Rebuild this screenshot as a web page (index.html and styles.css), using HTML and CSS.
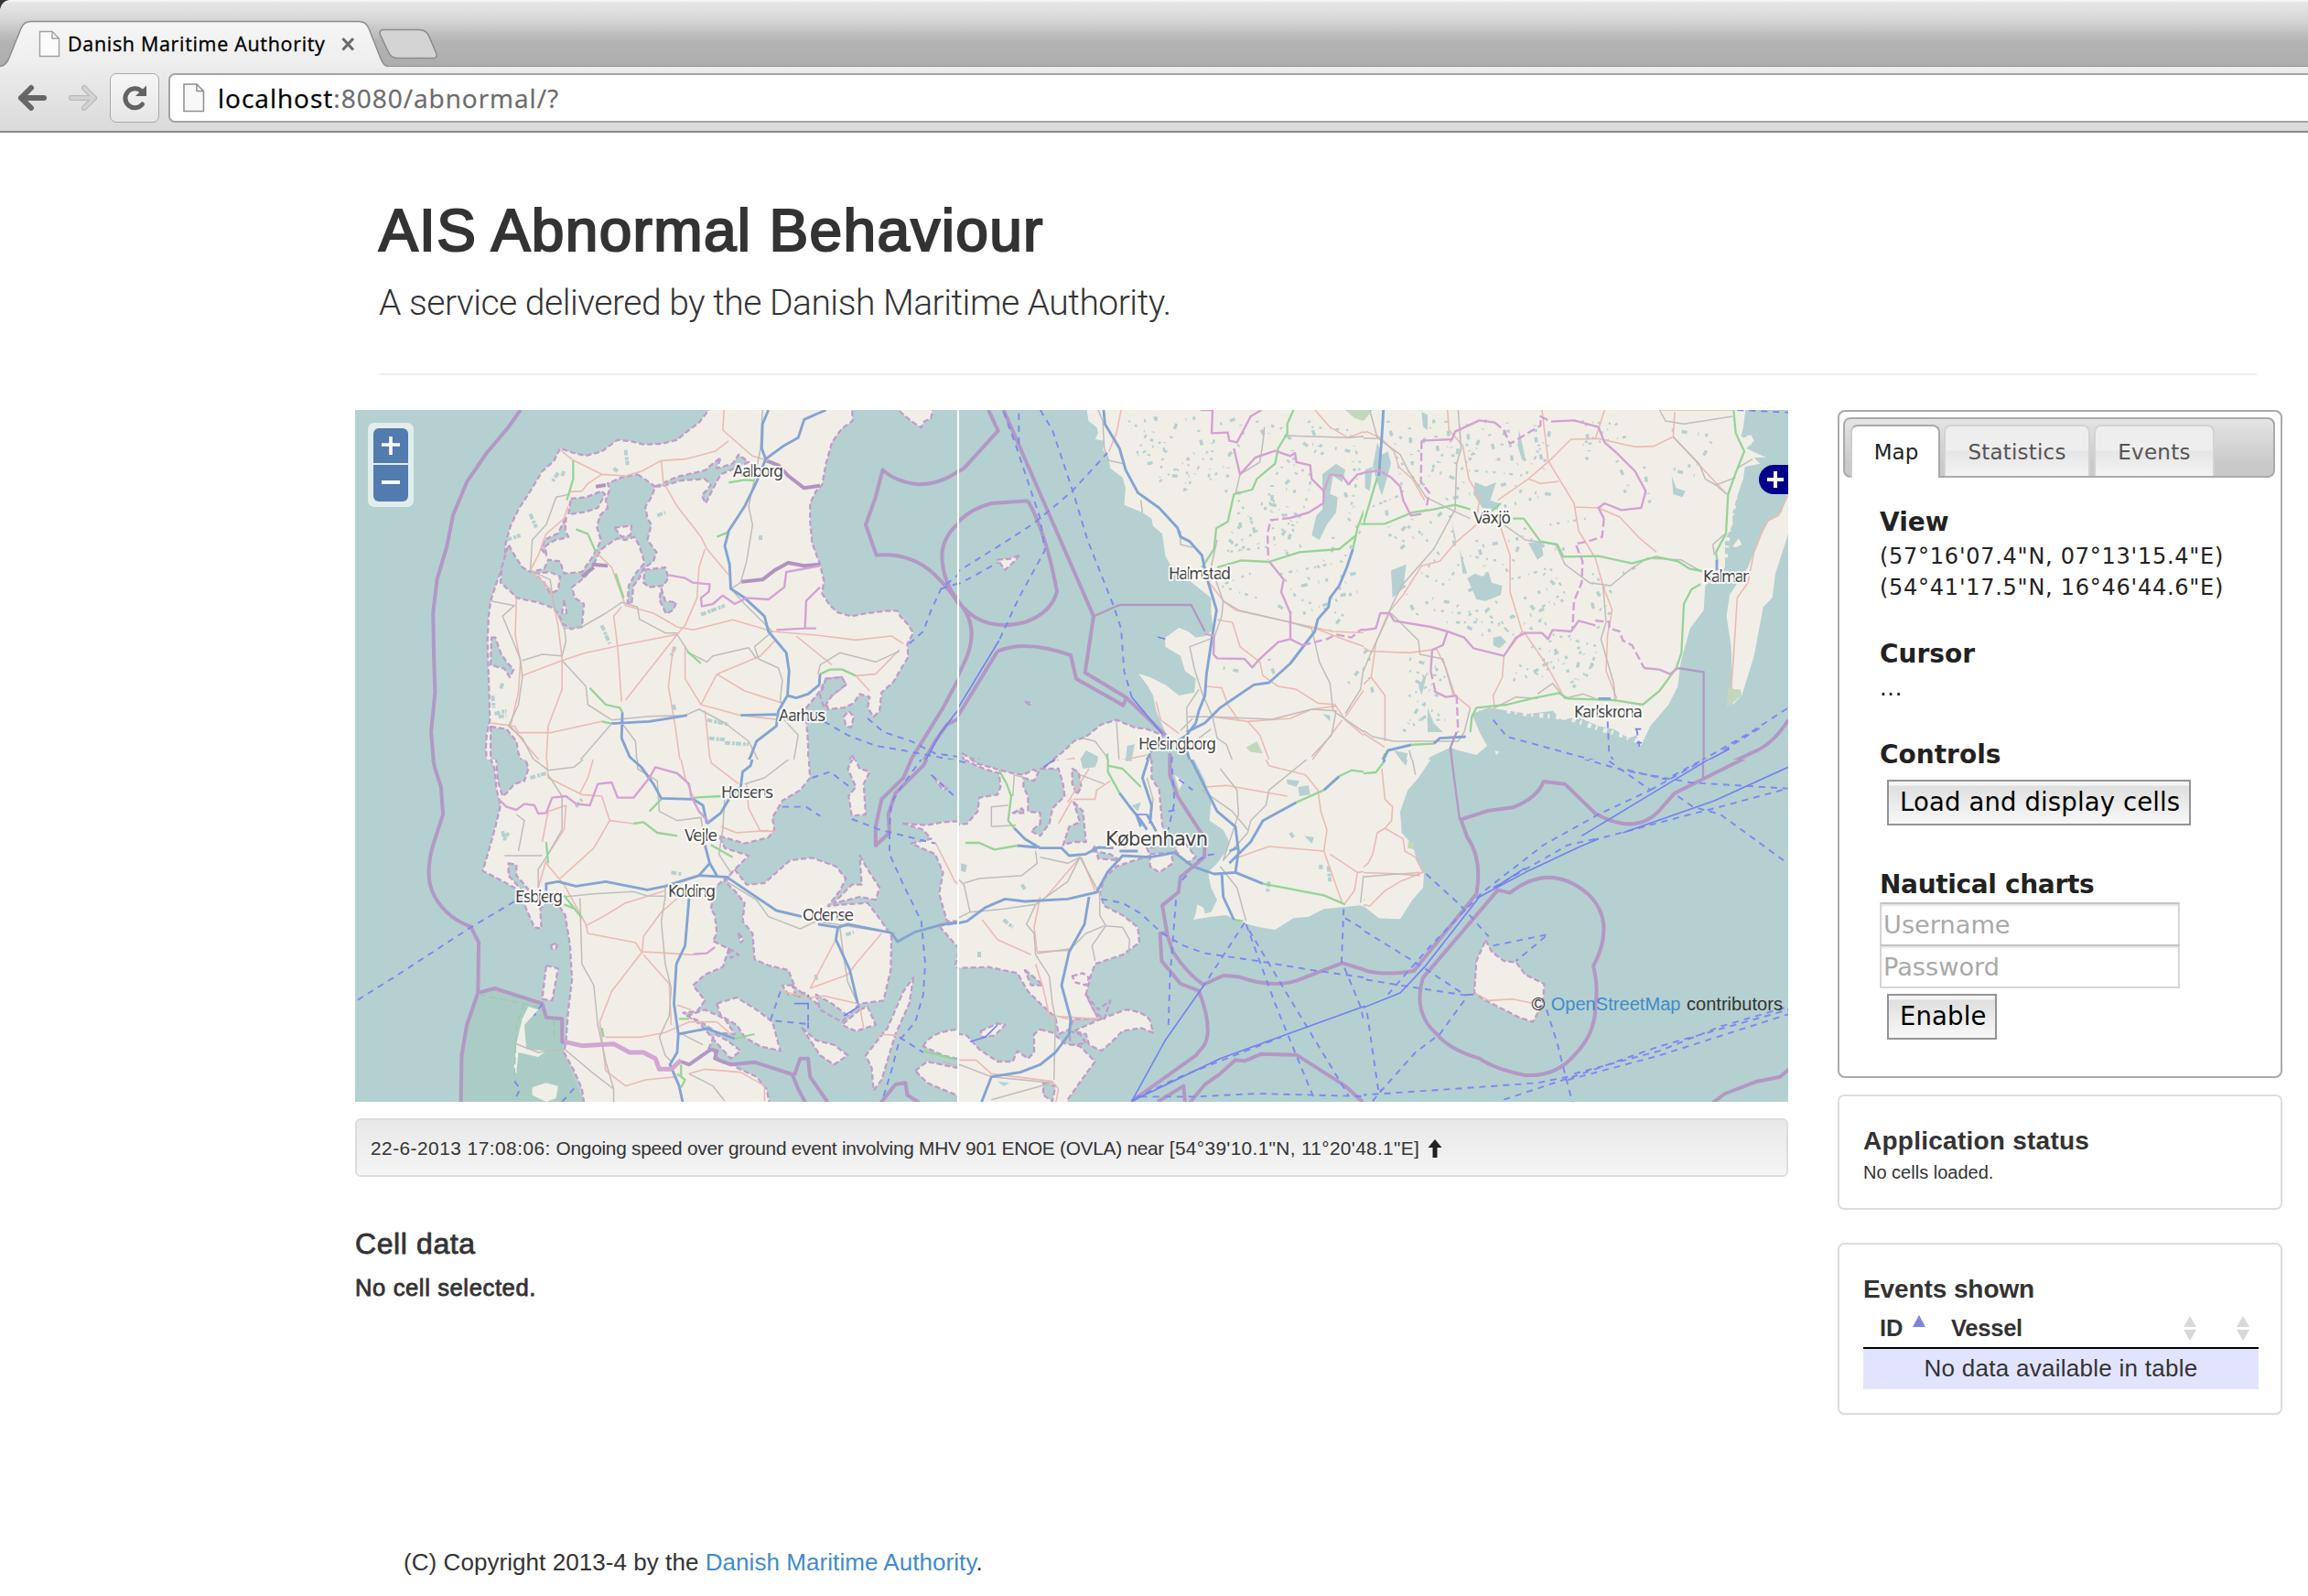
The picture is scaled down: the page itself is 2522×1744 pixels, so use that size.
FILE: index.html
```html
<!DOCTYPE html>
<html lang="en">
<head>
<meta charset="utf-8">
<title>Danish Maritime Authority</title>
<link rel="stylesheet" href="styles.css">
</head>
<body>
<div class="chrome">
  <div class="tabstrip">
    <svg class="tab-shapes" width="500" height="74" viewBox="0 0 500 74">
      <defs>
        <linearGradient id="tabfill" x1="0" y1="0" x2="0" y2="1"><stop offset="0" stop-color="#f6f6f6"/><stop offset="1" stop-color="#ededed"/></linearGradient>
      </defs>
      <path d="M0 0H10Q2 1 0 10Z" fill="#333"/>
      <path d="M0 72.500Q7 72 10 63L23 31Q26 23.500 34 23.500H392Q400 23.500 403 31L416 64Q419 72 424 72.500V74H0Z" fill="url(#tabfill)"/>
      <path d="M0 72.500Q7 72 10 63L23 31Q26 23.500 34 23.500H392Q400 23.500 403 31L416 64Q419 72 424 72.500" fill="none" stroke="#8d8d8d" stroke-width="1.500"/>
      <path d="M419 32.500H458Q466 32.500 469 40L477 59Q478 63.500 473 63.500H434Q427 63.500 424 56L415.500 38Q414 32.500 419 32.500Z" fill="#d4d4d4" stroke="#8a8a8a" stroke-width="1.500"/>
      <path d="M43.500 34.500H57L64.500 42V61.500H43.500Z" fill="#fbfbfb" stroke="#a0a0a0" stroke-width="1.400"/><path d="M57 34.500V42H64.500" fill="none" stroke="#a0a0a0" stroke-width="1.400"/>
      <path d="M374.500 42L386 54.500M386 42L374.500 54.500" stroke="#6b6b6b" stroke-width="3"/>
    </svg>
    <span class="tab-title">Danish Maritime Authority</span>
  </div>
  <div class="toolbar">
    <svg class="nav" width="110" height="54" viewBox="0 0 110 54">
      <path d="M34 16L23 27 34 38M23 27H48" fill="none" stroke="#666" stroke-width="6" stroke-linecap="round" stroke-linejoin="round"/>
      <path d="M92 16L103 27 92 38M103 27H78" fill="none" stroke="#b8b8b8" stroke-width="6" stroke-linecap="round" stroke-linejoin="round"/>
      <path d="M92 16L103 27 92 38M103 27H78" fill="none" stroke="#d4d4d4" stroke-width="3.600" stroke-linecap="round" stroke-linejoin="round"/>
    </svg>
    <div class="reload"><svg width="30" height="30" viewBox="0 0 30 30"><path d="M23.500 22A10.500 10.500 0 1 1 22.500 7.500" fill="none" stroke="#636363" stroke-width="5" stroke-linecap="round"/><path d="M28 1.500V13H16Z" fill="#636363"/></svg></div>
    <div class="omnibox">
      <svg width="24" height="32" viewBox="0 0 24 32"><path d="M1 1H15L22.500 8.500V30.500H1Z" fill="#f8f8f8" stroke="#8f8f8f" stroke-width="1.500"/><path d="M15 1V8.500H22.500" fill="none" stroke="#8f8f8f" stroke-width="1.500"/></svg>
      <span class="url"><b>localhost</b>:8080/abnormal/?</span>
    </div>
  </div>
</div>

<header class="page-header">
  <h1>AIS Abnormal Behaviour</h1>
  <p class="lead">A service delivered by the Danish Maritime Authority.</p>
</header>

<main class="columns">
  <section class="main-col">
    <div class="map">
      <svg class="map-canvas" viewBox="388 448 1566 756" width="1566" height="756">
        <!-- north-west: northern Jutland -->
        <svg x="380" y="440" width="667" height="390" viewBox="0 0 1538 1170" preserveAspectRatio="none">
          <path class="land coast" d="M910 -20L910 24 885 65 850 100 830 122 790 135 745 137 715 127 680 122 640 160 600 174 570 165 535 150 520 190 490 225 460 290 430 350 410 405 398 460 395 520 375 590 360 650 355 700 352 780 355 900 358 1040 350 1090 348 1130 352 1220H1160V1130L1158 1080 1155 1040 1150 1010 1165 985 1190 945 1205 905 1245 900 1255 925 1230 950 1205 975 1210 1005 1250 1000 1275 985 1290 955 1315 965 1310 1000 1325 1030 1340 1010 1345 950 1375 915 1395 870 1412 835 1410 790 1425 755 1410 725 1392 700 1385 682 1355 683 1300 692 1270 700 1235 688 1215 665 1195 625 1200 585 1190 530 1170 460 1165 390 1165 330 1180 290 1195 270 1205 200 1220 130 1245 85 1272 60 1270 -20Z"/>
          <path class="land coast" d="M1390 0L1392 30 1410 50 1425 65 1445 82 1452 62 1470 50 1476 0ZM1250 1030L1262 1010 1275 1030 1268 1065 1255 1060ZM1270 1155L1280 1180H1262Z"/>
          <path class="lake coast" d="M730 235L775 275 765 310 750 340 755 380 765 400 755 450 778 490 770 520 745 545 735 575 720 600 715 660 705 655 708 600 725 560 748 525 735 470 722 440 700 450 680 445 655 465 640 480 630 500 615 545 595 575 565 605 572 640 595 660 590 735 562 742 542 725 530 690 515 672 480 655 425 640 415 625 385 590 388 540 405 465 420 500 440 540 460 555 495 545 505 515 535 520 545 560 590 555 612 515 628 480 638 450 628 410 635 370 655 345 650 320 660 285 655 265 690 245Z"/>
          <path class="land coast" d="M470 560L510 555 535 570 530 615 510 625 495 590ZM672 410L715 403 712 435 690 440ZM545 650L552 690 540 690Z"/>
          <path class="lake coast" d="M562 315L600 310 640 290 648 300 630 345 600 358 556 366ZM550 375L548 420 556 440 520 452 498 470 500 500 488 480 495 450 530 428ZM748 548L800 540 808 575 795 600 760 605 745 590ZM790 610L800 650 828 655 820 680 802 692 785 645ZM362 770L372 770 385 820 400 850 418 875 408 900 395 872 360 860ZM360 1062L400 1070 425 1110 430 1150 455 1220 360 1220ZM1205 905L1245 900 1255 925 1220 960 1200 1000 1190 960Z"/>
          <path class="lake coast" d="M775 275L830 243 900 222 915 205 940 180 930 215 970 200 985 170 1010 195 975 215 940 235 925 270 902 330 892 305 915 270 900 250 840 255 790 275Z"/>
          <path class="fj" d="M1055 190L1085 205 1110 240 1150 280 1190 272M625 275L650 270M615 530L655 535M620 540L590 570"/>
          <path class="fj" d="M992 587L1045 580 1075 550 1110 525 1150 535 1190 530"/>
          <path class="lakeline" d="M700 155L705 205M530 230L515 260M545 225L540 240M670 215L680 225M460 365L475 410M400 450L435 435M720 350L735 375M780 370L800 360M890 695L950 665M640 730L660 790M365 960L368 1000M370 1020L400 1010M380 1030L400 1025M950 1115L1010 1120M905 1040L960 1055M825 800L815 830M390 920L385 940M730 250L740 270M1040 435V450M820 990L825 1010M910 1100L950 1105"/>
          <path class="pink" d="M948 24L945 90 1020 175 1060 190M960 125L925 160 850 185 790 190 740 225 700 240 640 235 570 190 535 155M640 235L605 265 590 290 560 292M790 190L795 260 830 340 890 440 905 480 960 565M555 340L545 380 500 430 480 500 460 550 510 610 520 670 530 730 540 840 540 940 505 1060 500 1180M900 480L885 540 880 640 850 730 830 760 690 795 600 820 540 845 440 895M625 490L665 540 700 665 770 690 830 735 870 745 970 712 1070 750 1180 762 1280 778 1370 765 1400 790M425 640L422 760 435 850 430 950 410 1060M690 670L670 700 680 800 690 980M830 760L700 975M820 800L808 930 825 1060 840 1200M850 800L850 905 890 990 930 890 1040 830 1080 775M360 1050L420 1060 430 1082 510 1082 640 1045M890 990L990 1025 1090 1040M930 890L1000 945 1095 985M1130 765L1220 860M1280 895L1330 890 1390 810M1280 895L1315 945M900 1010L915 1200M410 1060L500 1200"/>
          <path class="rail" d="M1045 24L1040 150 1025 250 1010 340 1020 400 1005 520 990 590 965 610 1000 660 1070 750 1025 800 1035 840 1085 870 1095 910 1090 970 1100 1040 1135 1090 1120 1200M560 300L525 310 500 400 465 450 460 550 510 580 520 670 545 740 590 735 650 690 690 655 730 670 735 710 800 755 830 755M360 650L420 665 390 700 435 840 440 900 430 990 405 1060 440 1100 480 1200M545 735L550 780 540 830 490 825 440 845M540 845L600 930 605 990 665 1040 760 1028 850 1025 885 1005 950 1050 1010 1110 1045 1200M830 760L860 820 905 850 920 830 1010 803 1030 840M1185 890L1190 860 1240 820 1330 850 1390 815M665 1052L580 1180M690 1050L725 1110 730 1200"/>
          <path class="green" d="M568 190L568 250 552 320M575 415L605 430 625 490M675 560L695 640M855 815L890 855M610 935L650 990 685 1000 692 1015M640 1045L665 1052M1190 890L1215 875 1245 874 1280 895M930 440L958 425M960 262L1000 253 1025 255"/>
          <path class="blue" d="M1060 24L1045 70 1043 150 1053 185 1030 260 1000 340 960 420 950 470 962 530 965 610 1000 640 1050 700 1060 750 1105 820 1112 880 1108 960 1085 1010 1080 1060 1030 1110 1015 1160 1000 1200M1205 24L1150 55 1135 115 1100 140 1053 185M1108 960L1130 968 1160 955 1188 925 1190 890M665 1052L760 1045 800 1037 855 1025M692 1015L690 1100 710 1160 740 1200M990 1025L1080 1022"/>
          <path class="county" d="M808 565L850 575 870 590 912 595 910 620 890 640 892 668 920 660 945 632 975 660 1005 640 1060 645 1100 605 1105 555 1190 535M1190 605L1155 650 1152 740 1080 745M1152 740H1180"/>
          <path class="sea-b" d="M435 24L405 80 350 165 300 260 265 370 250 470 225 580 215 690 217 830 220 950 210 1080 218 1200M1570 185Q1520 265 1440 268 1380 260 1348 220L1330 310 1305 400 1332 500Q1420 490 1480 565T1570 740M1570 365Q1490 430 1498 520 1502 590 1538 650M1570 830L1500 1000 1405 1200M1570 1015L1510 1055 1480 1110 1440 1200"/>
          <path class="ferry" d="M1415 790L1450 750 1470 680 1495 610 1570 530M1495 610L1570 580M1200 1045L1260 1090 1330 1125 1400 1140 1560 1180M1310 1035L1350 1080 1420 1110 1480 1150 1560 1165"/>
          <path class="ferry-s" d="M1570 960L1530 1020 1490 1090 1445 1200"/>
        </svg>
        <!-- south-west: southern Jutland and Funen -->
        <svg x="380" y="830" width="667" height="374" viewBox="0 30 1538 1122" preserveAspectRatio="none">
          <path class="sanct" d="M330 795L370 780 490 830 500 875 540 880 540 955 545 990 560 1040 595 1160H285L290 950Z"/>
          <path class="land coast" d="M352 0L370 60 375 130 385 180 372 250 355 330 340 395 385 425 420 450 440 490 470 580 488 585 485 520 500 500 530 505 548 540 560 640 565 750 555 860 550 950 545 990 570 1050 590 1110 597 1170H1065L1055 1110 1030 1070 980 1040 960 1020 940 1025 920 980 905 990 925 930 955 950 990 985 965 1010 930 960 890 900 845 860 880 855 900 820 870 770 900 735 945 710 960 650 920 625 930 600 925 540 915 520 925 450 960 410 1010 345 950 320 935 280 1000 305 1060 285 1075 260 1070 220 1095 165 1140 130 1165 90 1160 0Z"/>
          <path class="lake coast" d="M372 -10H440L455 60 445 100 420 110 400 140 390 150 378 100ZM405 370L425 375 425 410 455 455 440 460 405 410Z"/>
          <path class="land coast" d="M975 390L1005 440 1050 435 1080 400 1115 360 1170 352 1230 380 1255 420 1240 460 1210 510 1250 505 1310 500 1345 560 1370 610 1368 720 1350 820 1290 830 1260 870 1200 850 1150 795 1110 800 1095 770 1125 770 1110 720 1060 705 1025 685 1020 600 995 560 1000 500 975 460 950 430ZM1290 345L1310 390 1340 450 1330 490 1290 480 1260 490 1225 500 1270 440 1295 440ZM1275 20L1290 60 1315 70 1300 110 1305 210 1270 215 1262 150 1280 120 1260 60ZM1425 745L1415 830 1380 930 1345 1080 1325 1115 1320 1040 1305 1000 1360 910 1400 790ZM1145 910L1180 950 1225 965 1260 1000 1225 1030 1190 1000ZM1290 850L1310 840 1330 900 1280 920 1245 900ZM930 830L980 810 1030 850 1070 890 1090 985 1040 970 1000 940 980 900 940 870ZM855 870L900 850 950 880 975 930 930 925 890 890ZM1400 240L1460 245 1500 235 1570 230V560L1510 560 1490 470 1500 400 1480 340 1420 305 1470 290 1450 260ZM1490 575L1570 560V720L1530 710 1540 650ZM1450 970Q1470 920 1540 915H1570V1020L1500 1000ZM1430 1050L1460 1020 1570 1050V1150L1460 1090ZM500 705L530 715 515 820 490 815ZM985 600L998 620 990 630ZM512 640L528 630 525 650 515 652ZM1475 85L1510 125 1500 130Z"/>
          <path class="land" d="M455 840L480 850 445 900 450 980 500 985 480 1005 430 990 425 1060 418 1050 425 960 440 880ZM465 1105L500 1090 530 1100 525 1140 500 1152 465 1130Z"/>
          <path class="lake coast" d="M1180 800L1220 830 1260 870 1245 890 1190 850ZM1120 770L1150 800 1130 810ZM960 650L985 670 965 680Z"/>
          <path class="lakeline" d="M390 265L395 290 405 270M1180 735V755M1255 605L1275 595M460 90L500 75M1550 370V400M815 400L840 405M575 185L590 160"/>
          <path class="pink" d="M500 0L505 90 590 145 640 150 660 230 720 240M625 0L605 90 585 140M835 0L850 90 870 150M915 0V40L985 110M660 230L620 320 535 420M500 360L480 450M500 370L545 440 600 570 605 600 725 630 740 660 810 665 870 670M600 575L650 540 700 500 800 460M835 480L790 530 745 610 742 660 665 790 635 890 650 1050 700 1100 750 1080 830 1070M745 670L810 765 815 900M650 940L740 940 800 925 860 890 930 890 965 930M490 300L505 200 550 180M550 180L545 260 505 340M1005 110L1010 190 1040 265 1080 265M940 250L980 270 1060 262M1230 620L1165 780M1345 600L1280 700 1260 735 1165 780M830 835L865 850M860 1060L900 1045 990 1055 1050 1100 1050 1150M1325 930L1400 935M1480 300L1530 430 1570 480M1095 790L1165 810 1200 805 1285 830M1290 840L1300 910"/>
          <path class="rail" d="M460 20L505 65 570 55 620 0M505 80L540 150 540 260 500 350 480 390 480 450M395 345H490M545 480L620 470 720 463 755 477 800 478V440M585 485L590 700 620 770 630 900 650 1020 670 1110V1152M420 960L480 990 545 978 620 1060 670 1110M800 480L790 560 800 700 815 780 810 870 785 940 800 1000 815 1020M730 0V60L780 100 785 200 830 230 890 220 895 270M950 150L945 260 935 340 965 400 955 430 1030 490 1060 545 1140 585 1180 560 1380 600M1140 0L1050 90 1000 110M425 210L445 230 430 330M1240 580L1250 680 1260 760 1285 830M835 925L895 965M860 1060L920 1100 950 1150M1500 1020L1570 1050"/>
          <path class="green" d="M790 160L760 200M720 240L745 235 780 270 830 280M500 300L505 370M545 475L590 550M870 155L940 150M915 310L970 350M545 505L575 520M835 880L860 880M975 945L1025 930M640 910L645 940M830 1060L850 1080 840 1105M840 1030L840 1070M1450 985L1530 1012"/>
          <path class="blue" d="M692 0L740 55 770 110 790 157 870 160 895 180 905 240M1025 0L1015 50 995 70 990 120 965 150 940 205 905 240M900 310L912 370 885 410 800 445 755 457 650 430 575 445 530 430 500 437V460M885 410L955 415 1000 455 1080 525 1145 545M912 370L930 410M1185 570L1235 580 1260 570 1370 598M1235 580L1230 620 1265 720 1285 830M1370 598L1385 627 1430 595 1500 570 1570 560M860 485L850 640 828 700 822 830 833 930 830 990 812 1030 835 1100 845 1160M833 930L905 912 975 945"/>
          <path class="county" d="M380 160L400 185 425 195 445 175 470 180 480 207 500 205 515 155 550 150 575 175 610 180 630 110 665 105 680 155 720 155 760 90 775 55 830 75 860 110 865 150 885 200 910 235M870 668L905 665 925 645"/>
          <path class="border" d="M545 955L590 968 670 962 710 990 745 990 775 1010 785 1045 815 1045 840 1015"/>
          <path class="sea-b" d="M210 0L220 60 235 120 240 210 215 310Q195 400 212 460 240 545 310 578L330 630 328 795 370 780 490 830 500 875 540 880V955L545 960M328 795L300 900 287 1000 285 1152M840 1020L860 1030 915 980 930 985 925 1010 965 1030 1025 1022 1120 1062 1135 1110 1155 1160M1125 1065L1140 1010 1160 1010 1165 1070 1210 1155M1430 0L1400 90 1345 160 1330 250V312L1365 270 1362 210 1380 140 1450 50 1470 0M1340 1160L1380 1095 1405 1090 1410 1130 1440 1155"/>
          <path class="sea-g" d="M330 800L420 825 480 840M445 830L425 900 420 1060 425 1100M520 880V950"/>
          <path class="ferry" d="M25 818L115 745 310 580 420 495M1365 270V340L1400 440 1445 560 1455 700 1450 800 1430 890 1390 950 1370 1050 1345 1155M1450 20L1400 110 1370 170 1365 260M1270 225L1340 260 1480 305M1095 185H1155L1190 215M1170 90L1215 70 1270 125M1090 790L1065 885 1160 897V800M1160 890V930M540 1152L570 1108M490 830L470 870M420 1085L435 1110 420 1145M1390 940L1450 990M1470 80L1570 200"/>
          <path class="ferry-s" d="M1290 838L1250 870M1125 830H1160"/>
        </svg>
        <!-- north-centre: Kattegat and west Sweden -->
        <svg x="1048" y="440" width="442" height="390" viewBox="24 0 1326 1170" preserveAspectRatio="none">
          <path class="land" d="M440 0L448 60 475 80 480 100 470 120 500 125 495 155 512 175 520 215 560 245 570 280 565 335 625 360 655 380 660 405 690 430 700 500 715 530 750 560 800 600 850 640 850 690 858 745 830 765 800 770 775 750 745 738 700 770 700 800 750 830 765 880 800 905 795 950 745 960 700 925 650 900 612 888 640 925 660 960 670 1010 700 1080 730 1120 770 1150 800 1200H1400V0Z"/>
          <path class="land coast" d="M655 1200L650 1150 690 1090 640 1070 600 1065 540 1040 490 1055 440 1095 400 1110 370 1140 320 1180 290 1180 270 1210H660Z"/>
          <path class="land coast" d="M150 515L190 512 225 498 200 525 175 548ZM240 980L262 985 255 990ZM35 1150L60 1165 130 1182 200 1200H45Z"/>
          <path class="lake" d="M1215 235L1260 200 1290 220 1280 260 1250 240 1240 300 1265 310 1260 360 1230 400 1205 450 1180 435 1195 370 1215 350ZM660 755L680 765 665 775ZM420 1170L440 1140 480 1160 470 1200H420ZM575 1125L600 1120 590 1170H570ZM1215 1020L1240 1025 1240 1045ZM1360 180H1380V280L1355 240Z"/>
          <path class="speck" d="M630 60L670 50 640 200 690 190 740 60 800 50 820 140 720 240 780 240M880 70L940 50 960 120 910 170 900 290 970 300M1000 60L1030 120 1060 60 1110 120 1130 230 1080 280 1160 300M1050 270L1050 360 1000 330 1100 340 1080 440 1130 360 1090 500 1160 460M940 360L960 500 900 440 980 380 1010 480M1170 60L1220 180 1150 130 1310 160 1320 220 1290 300 1330 360M1250 440V480L1150 600 1320 560 1240 640 1330 620 1130 700 1060 660M890 870L940 880M1040 840L1060 900M1300 920L1350 860M1240 750L1280 700"/>
          <path class="dots" d="M580 60L640 100 600 180 700 120 680 260 780 180 760 300 860 120 840 260 900 200M940 320L1000 420 900 490 1060 470 1040 300 1120 420 1160 330 1180 240 1100 190 1060 240M1180 80L1300 90 1340 200 1300 380 1340 420 1280 520 1190 540 1080 560 1130 640 1290 700M980 560L880 600 1000 640"/>
          <path class="park" d="M965 1130L1000 1110 1020 1150 980 1145ZM1290 24H1350V60L1320 50Z"/>
          <path class="pink" d="M555 24L540 100 515 160M845 590L890 650 930 680 1100 718 1180 735 1250 750 1360 755M1190 24L1240 80 1300 115 1350 95 1380 100M870 712L920 720 945 800 1010 850 1020 895 1070 930 1130 940 1200 985 1260 990M835 930L885 935 905 990 940 1040M860 1030L970 1045 1110 1035 1180 1005 1260 995 1290 1040 1360 1100M970 1045L1010 1090 1040 1170M670 980L685 1040 745 1085M1180 735L1270 770 1380 810M1290 1030L1380 900M1280 1040L1160 1200M440 1190L520 1180 640 1155M320 1185L400 1165 410 1200"/>
          <path class="rail" d="M480 24L495 60 500 150 515 190 565 200M620 320L625 360M945 235L1010 195 1020 130 1025 80M945 235L930 300M1090 108L1300 115 1380 108M750 420V465L790 475M870 450L850 540 890 650 885 700 860 770 780 800 795 870 820 950 855 1030 870 1100 900 1120 930 1200M775 1150L770 1000 810 940M775 1030H860L1050 1038 1180 1005 1260 1010 1245 1090 1180 1160M890 650L940 680 1110 720 1180 740 1205 850 1240 920 1250 1010 1380 1100M1380 790L1350 870 1340 940 1290 1020M540 1045L545 1120 550 1190M430 1100L470 1110 500 1150 530 1195M750 1075L790 1035M810 1100L850 1070"/>
          <path class="green" d="M1120 24L1100 70 1100 100 1070 150 1060 200 1000 250 985 285 925 300 905 390 867 412 860 480 820 540M870 540L950 517 1040 522 1140 490 1270 480 1325 435 1330 410 1380 280M1315 480L1325 435M1340 398H1380M510 1150V1200"/>
          <path class="blue" d="M498 24L502 70 550 150 570 220 610 295 680 345 740 410 750 440 780 455 820 500 835 570 868 680 855 760 835 890 830 960 810 1010 800 1050 770 1090 740 1110M1315 480L1295 540 1270 600 1240 640 1235 670 1200 710 1190 750 1110 855 1040 918 990 925 880 1000 830 1050 770 1080M650 1150L625 1200M770 1140L790 1200"/>
          <path class="county" d="M815 24H855L852 100 905 98 910 125 935 130 980 45 1015 24M925 150L945 235 995 180 1060 158 1110 175 1125 165 1130 195 1175 205 1180 250 1220 290 1218 330 1170 360 1110 378M1220 290L1240 235 1280 240 1300 268 1330 235 1380 225M1040 520L1088 580 1080 620 1110 690V775L1070 785 1010 840 985 868 960 840 870 838 858 825 860 765 830 758M1110 775L1150 795"/>
          <path class="county-d" d="M1150 795L1230 775 1260 760 1310 770 1340 745 1380 740M1110 378L1045 385 1035 430 1038 515"/>
          <path class="sea-b" d="M120 24L152 92 40 215 0 240M170 24L465 700 437 885 570 965 700 1090M150 815L0 1060M150 815Q240 775 390 828L408 905 562 992 573 967M250 322Q310 430 345 620 325 690 240 720 100 755 24 655L0 610M250 322L130 330Q50 350 0 415M24 655Q100 740 35 865L0 940M715 1150V1200"/>
          <path class="sea-t" d="M550 663H785L830 750M465 700L550 663"/>
          <path class="ferry" d="M170 30L210 140 290 380 305 485 220 640 155 780M220 35V150M290 24L330 90 400 300 445 450 530 665 555 740 565 880 590 965M10 560L170 460 270 395 390 295 510 165M10 600L60 575 150 525M722 1160V1200"/>
          <path class="ferry-s" d="M155 780L0 1035M590 965L690 1085M675 768L700 775"/>
        </svg>
        <!-- south-centre: Zealand, Øresund, Scania -->
        <svg x="1048" y="830" width="442" height="374" viewBox="24 30 1326 1122" preserveAspectRatio="none">
          <path class="land coast" d="M655 10H380L350 28 320 40 285 78 270 62 235 80 200 75 150 62 80 42 45 15 40 28 70 45 110 62 155 75 160 120 150 145 90 155 85 200 50 240 -20 250V715L120 710 215 730 250 790 290 830 340 875 350 930 385 915 400 880 480 880 440 800 455 740 470 700 560 670 615 630 610 580 560 540 500 510 485 470 500 420 540 380 600 360 650 345 640 320 700 310 690 240 680 130 655 90 655 10Z"/>
          <path class="land coast" d="M395 740L430 730 450 745 440 770 405 760ZM650 340L720 335 725 370 680 400 650 380ZM490 880L570 850Q630 855 650 885L660 925 620 910 560 920 520 960 490 985 450 965 440 930 400 920ZM290 915L330 925 370 960 420 970 470 1020 440 1060 380 1145 375 1170H-20V920L50 935 90 980 150 1020 200 1020 215 985 250 1010 270 990 270 930ZM740 290L770 310 800 350 770 370 735 330ZM95 920L150 895 175 900 140 935 100 940Z"/>
          <path class="lake coast" d="M235 90L270 100 290 60 350 60 365 110 370 150 330 190 320 240 290 280 260 265 290 240 290 205 250 200 250 150 235 120ZM395 60L415 70 425 120 410 145 395 110ZM400 170L430 200 440 300 400 300 365 310 385 250 420 235ZM460 330L520 340 550 360 480 355 470 310ZM240 720L265 740 300 770 260 770ZM440 800L480 850 520 820 500 880 470 860ZM385 920L420 930 440 960 390 965ZM300 1090L340 1100 330 1150 300 1130ZM200 205L230 190 240 205Z"/>
          <path class="land" d="M780 0L830 100 850 170 845 230 890 260 910 300 900 330 870 370 840 400 850 450 870 490 850 530 830 535 825 515 805 505 800 535 792 555 850 545 900 540 950 565 1010 580 1060 588 1120 550 1170 545 1220 520 1340 508 1390 530V0ZM730 80L760 100 745 130Z"/>
          <path class="lake" d="M420 20L450 5 480 30 470 55 430 60ZM1098 95L1140 100 1130 120 1100 110ZM1135 120L1170 115 1175 145 1140 150ZM30 370L50 375 45 400 30 395ZM1155 280L1188 285 1180 305ZM150 1085L190 1090 170 1100ZM570 10H590V35H570ZM590 180L620 170 610 200Z"/>
          <path class="lakeline" d="M230 440L240 455M170 555L200 580M1110 270L1120 285M1210 375V390M1235 380L1240 430M90 660V680M1040 430L1035 465"/>
          <path class="pink" d="M290 480L270 580 280 660 390 655M275 700L300 780 320 870 480 880M100 555L150 620 260 670M400 160H470L475 130 520 100M395 160L350 240M940 350L1040 315 1220 330 1230 260 1210 200 1200 130 1160 80M830 120L900 115 1100 150M1220 330L1280 500M1240 340L1330 400 1400 390M0 1015H80L130 1060 330 1085 350 1110 340 1160M425 350L470 460M420 350L310 480M340 870L420 890M450 60L380 170M1160 80L1040 50 1020 10M530 260L570 320M1330 400L1320 460 1290 500"/>
          <path class="rail" d="M20 550L60 530 170 520 275 505 380 430 420 350 485 470V540L505 575 560 580 583 620 580 665M505 575L460 640 470 690M0 400L40 440 60 530M40 435L90 420 230 410 280 370 275 330M275 505L245 570 270 600 275 670 320 740 330 830 340 880 335 1080M0 1020L130 1070 330 1090M130 1145L330 1090M130 250L210 245M130 250V185L185 180M200 150L205 80 240 90M290 350L380 370 420 350M1040 130L1030 180 980 230 970 270 890 360 940 210 935 130 880 60M970 260L920 200 820 130M880 380L935 450 965 560M1040 130L1200 0M500 575L440 600 390 650 280 665M640 90L660 160 650 230M420 80L500 110M1350 410L1340 500"/>
          <path class="green" d="M155 65L180 110 195 150 185 230 205 255M45 303H90L140 325 215 312M512 10V70L550 140M512 50L560 60 620 120M1130 170L1220 130M1270 85L1310 65 1390 75M1020 437L1220 475 1290 505M925 555L955 560"/>
          <path class="blue" d="M0 570L50 560 110 515 175 487 240 495 380 487 475 465 510 400 560 345 650 350 730 335 790 380 860 405 930 400 1020 437M450 480L435 570 385 660 360 770 390 880 385 930 340 990 290 1030 225 1055 130 1070 95 1160M205 255L240 290 290 320 360 320 385 345 440 340 480 318 530 320M215 312L280 318M650 10L625 90 655 180 650 240M550 140L580 180 620 230 640 260M780 20L870 200 930 250 940 330 930 400 865 405M885 400L890 480 925 555M910 370L980 300 1020 230 1130 170M1220 130L1270 85M910 330L935 320M550 330L610 330M605 210L620 250M640 210L670 265"/>
          <path class="sea-b" d="M715 0V80L740 150 830 290 828 350 750 415 743 465 690 508 708 610 725 660Q770 730 825 768L890 738 940 742Q1050 780 1130 755L1280 697 1390 730M708 598L683 600 688 690 750 765 810 788Q860 920 825 970L800 1000 590 1150M675 1152L760 1100 765 1155M780 1155L830 1095 880 1060 930 1015 960 1018 1015 995 1130 998 1290 1100 1350 1155"/>
          <path class="ferry" d="M490 487L560 500 620 535 690 600 760 640 830 665 1000 690 1180 720 1390 750M735 490L725 620 715 750 710 910M960 565L830 765M965 570L1060 830 1185 1135M975 590L1100 800 1300 1130M1285 520L1278 690 1340 840 1380 1010M1290 550L1390 610M620 1135H800L1000 1125 1390 1135M720 20L730 170 710 260M745 95L790 130M710 200L735 195M860 340L830 345 800 365M770 410L750 430M600 1140L760 1065 1080 940"/>
          <path class="ferry-s" d="M830 765L700 950 590 1150 880 1010 1100 930 1390 825M300 55L345 25M60 955L110 940 150 900M605 210H640M0 30L45 40"/>
        </svg>
        <!-- north-east: Småland, Blekinge, Öland -->
        <svg x="1490" y="440" width="464" height="390" viewBox="30 0 1392 1170" preserveAspectRatio="none">
          <path class="land" d="M0 0H1285L1275 80 1265 120 1300 105 1310 125 1285 150 1350 180 1310 180 1330 200 1280 210 1275 250 1260 290 1240 360 1240 400 1215 450 1215 540 1150 600 1145 680 1100 740 1070 850 1060 930 1030 990 970 1060 935 1135 925 1090 900 1100 850 1070 800 1060 730 1030 680 1040 650 1010 570 1020 440 1000 385 1020 410 1080 435 1125 400 1155 340 1140 315 1130 250 1160 215 1200H0ZM1422 290L1400 360 1360 385 1330 440 1290 540 1230 630 1220 700 1235 800 1240 990 1270 960 1310 830 1340 670 1370 640 1380 560 1422 430ZM1240 470L1260 445 1270 465 1250 475ZM460 1140L475 1145 465 1155Z"/>
          <path class="park" d="M1225 930L1245 940 1265 940 1270 960 1220 1000ZM0 24H60L30 60 0 70Z"/>
          <path class="lake" d="M395 260L430 275 465 260 445 320 475 330 470 350 420 345 390 300ZM75 130L90 170 110 160 120 200 90 305 75 260 60 210ZM220 30L240 40V90L225 80ZM540 90L560 180 550 190 535 140ZM370 575L395 560 420 570 440 555 450 590 485 600 480 630 430 650 400 645ZM345 480L370 560 355 560ZM120 550L170 530 160 610 125 640ZM455 770L480 765 498 785 475 805 455 795ZM570 460L610 455 620 500 600 515ZM240 1000L260 1050 290 1080 240 1080ZM130 1140L175 1150 165 1190ZM210 930L240 880 220 960ZM320 390L335 460 325 440ZM1040 240L1055 280 1085 290 1075 310 1045 300ZM35 220L60 210 50 290 35 280Z"/>
          <path class="speck" d="M110 60L130 140 180 80 190 200 260 60 280 200 230 220M370 70L380 200 430 60 470 200 500 60 520 210 600 160 590 70 620 220 640 90M280 230L360 260 300 320 520 260 540 290 640 300 490 340M100 320L120 460 190 380 150 480 310 340 330 480M400 450L440 580 370 620 470 650 400 710 330 660 250 640 200 700 150 570M420 470L520 450 560 440 640 480 700 480M620 560L660 600 560 640 620 720 570 700 700 640M340 720L420 760 520 700 580 740 640 720M180 840L280 870 200 910 270 960 210 1000 160 1080 260 1010M300 60L330 210 350 90M760 70L770 170 740 220M860 190L900 280 850 320M950 210L970 340M1040 90L1180 110 1130 200 1040 220 1120 240M780 590L840 700 780 660 800 740M640 780L700 880 620 860 740 820 720 930 780 860 700 760M560 900L640 850 580 830M520 520L560 410M880 560L920 540M0 840L60 800 40 870M50 900L60 950"/>
          <path class="dots" d="M60 340L160 300 140 180 220 280 320 120 400 150 350 220 480 230 560 240 620 130M220 430L280 500 220 560 300 600 360 500 480 520 520 580 640 540 690 620 600 680M260 680L340 690 420 680 520 760 460 720 300 720M580 800L660 820 620 900 540 860 520 920M650 760L800 800 760 900 700 920M180 880L300 900 180 960 300 1040 180 1040M720 60L860 70 740 140 900 110M640 400L760 380M780 560L860 640"/>
          <path class="islets" d="M1262 120L1300 112 1262 240 1245 330 1225 430 1215 520M500 1010L560 1020 700 1034 800 1068 870 1088 930 1110"/>
          <path class="pink" d="M305 24L310 90 355 140 375 250 410 310 400 400 330 460 280 520 220 535 160 630 110 690 70 790 55 900 100 960 100 1110M615 24L635 190 720 330 735 420 790 510 815 600 845 680 830 760 825 880 860 970M470 320L570 250 640 190 710 120 800 118 920 145 980 143 1045 112 1050 30M570 250L610 265 670 258M720 342L800 345 870 375 930 440 990 490M480 410L510 500 510 620 550 750 490 830 485 900 455 960 460 1010M555 750L630 860 690 970M0 110L40 95 85 115 130 160 145 210 190 250 230 320M820 24L790 118M1000 24H1240M1045 112L1220 300M1422 300L1390 370 1350 390 1310 490 1290 590 1255 640 1245 800 1235 940M0 785L50 815 180 820 270 808 300 870 330 960 380 1000M55 900L0 950M0 1065L100 1130"/>
          <path class="rail" d="M340 24L350 150 335 200 330 350 260 480 155 600 120 670 110 700 50 830 0 950M120 690L210 780 215 825 290 840 325 960M0 115L80 118 150 170 175 220 235 310 325 355 380 380M490 400L560 450 660 465 690 530 770 590 840 600 900 550 960 510 1070 515 1140 555M1045 112L1130 200 1150 250 1185 270 1250 245M1220 300L1185 270M1000 24L1020 60 1080 70 1240 45M1305 185L1255 215M815 600L825 720 808 775 850 920 855 980M1215 430L1175 465 1180 500M380 1000L360 1080 340 1110 130 1110 60 1095 0 1055M600 955L650 920 690 970 750 955 790 970M460 1000L530 965 600 970M180 1140L195 1200M50 24L75 115"/>
          <path class="green" d="M1243 24L1250 100 1278 160 1250 230 1225 300 1218 430 1185 490 1190 520M0 450L30 395 75 245M30 398L100 397 190 360 260 350 330 335 380 350M450 355L480 330M520 380H555L610 455 665 465 685 505 800 503 910 527 990 505 1060 520 1100 545 1140 552M1135 595L1105 612 1080 660 1072 820 1055 870 1000 945 945 990 850 975 700 970 670 952 580 970 500 990 400 1000 385 1030 380 1080M180 1122L260 1118M100 1150L80 1200"/>
          <path class="blue" d="M95 24L90 110 80 240M1188 515V550M365 1095L280 1100 260 1118M185 1122L110 1140 90 1180M800 970H840"/>
          <path class="county" d="M0 245L30 230 80 222 120 245 150 275 160 320 185 370 220 365M220 125L320 120 330 95 410 58 460 65M645 62L720 58 800 80 820 130 860 165 920 225 955 290 940 345 875 352 820 330 800 345 818 380M0 750L70 740 85 690 115 690 130 715 250 735 305 750 360 770 390 805 490 830 530 770 560 755 615 755 635 775 650 745 710 750 735 715 790 730M305 750L290 795 255 810 250 880M260 945L300 965 335 960M950 870L1000 875 1035 890 1060 870"/>
          <path class="county-d" d="M220 125L218 260 245 295 235 350M460 65L490 90 510 135 610 75V45L645 62M818 380L812 440 765 455 725 463 748 520 745 590 720 650 715 740M790 715L835 718V740L870 750 880 780 910 795 950 870M250 880L265 945M335 960L340 1080"/>
          <path class="sea-t" d="M1060 870L1145 883V1200M335 1080L315 1130 322 1200"/>
          <path class="sea-b" d="M1422 1040Q1380 1110 1320 1140L1180 1205"/>
          <path class="ferry" d="M455 1040L500 1095 720 1155 870 1195M830 1045L835 1150 860 1190M1100 1195L1300 1080 1422 1000M1210 1140L1340 1060M1255 24L1422 32M925 1070L935 1130"/>
          <path class="ferry-s" d="M1115 1195L1230 1135M920 1070H940M925 1115H942"/>
        </svg>
        <!-- south-east: Bornholm and the Baltic -->
        <svg x="1490" y="830" width="464" height="374" viewBox="30 30 1392 1122" preserveAspectRatio="none">
          <path class="land" d="M0 0H290L250 30 210 90 175 130 150 200 155 270 190 310 205 360 228 405 225 450 190 490 150 553 80 550 30 510 0 500ZM340 0H410L385 18ZM455 0H475L465 12Z"/>
          <path class="lake" d="M140 0H180L170 50 150 30Z"/>
          <path class="park" d="M175 300H195V325L175 320Z"/>
          <path class="land coast" d="M430 622L450 660 490 690 530 695 560 735 622 765 618 830 585 890 540 875 480 845 430 820 393 795 400 690Z"/>
          <path class="pink" d="M90 60L100 160 125 185 122 230 100 255 75 270 60 340 45 370 0 405M100 255L160 290 165 330 200 350 225 400 150 430 100 460 50 510 0 500M10 400L150 405 215 400M395 795L440 820 520 815 580 828"/>
          <path class="rail" d="M110 0H170L190 30 200 80M0 500L30 490 15 440 30 415 140 405 215 410"/>
          <path class="green" d="M0 65L20 76 70 72 95 40"/>
          <path class="blue" d="M95 40L110 0"/>
          <path class="sea-b" d="M345 228L440 197 520 187Q600 155 620 102L690 110 790 207Q930 285 1010 185L1050 140 1330 0M350 230L370 285Q420 355 400 470L195 722Q80 745 0 708M470 458L225 745Q190 860 270 930 310 980 410 1010 460 1045 560 1065 660 1070 720 1000 790 930 790 840 800 770 783 708 860 560 765 470 640 365 510 467ZM1175 1155L1215 1125 1320 1085 1395 1070 1425 1045M0 1120L25 1155"/>
          <path class="sea-t" d="M315 0L345 228M1143 0V90"/>
          <path class="ferry" d="M675 5L880 65 1100 105 1420 125M835 35L970 130 800 210 620 310 420 465 250 640 110 800M1060 150L1110 185 1200 210 1420 370M1200 0L1020 95 880 60M970 130L1130 40M235 405L350 510 440 610M0 572L200 695 360 800M0 745L150 770 360 802M455 640L635 603 530 690M360 820L280 930 200 990 80 1125 40 850 0 800M630 850L665 960 690 1060 715 1155M20 1130L320 1110 600 1090 700 1070M455 450L700 310 790 290M780 295L1100 210 1180 190 1420 125M60 1150L90 1110"/>
          <path class="ferry" d="M490 1145L760 1055 1000 970 1422 850M700 1080L1000 1000 1422 865M720 1060L1000 985 1200 905 1422 840"/>
          <path class="ferry-s" d="M0 855L150 795 230 710 410 480 560 400 740 315 800 290M745 280L1210 0M460 450L560 385M880 270L1180 165 1422 55M360 802L390 800"/>
        </svg>
        <rect x="1046" y="448" width="2" height="756" fill="#fff"/>
        <g class="labels">
          <text x="801" y="521" textLength="55">Aalborg</text><text x="851" y="788" textLength="51">Aarhus</text>
          <text x="788" y="872" textLength="57">Horsens</text><text x="748" y="919" textLength="36">Vejle</text>
          <text x="730" y="980" textLength="52">Kolding</text><text x="563" y="986" textLength="52">Esbjerg</text>
          <text x="877" y="1006" textLength="56">Odense</text><text x="1277" y="633" textLength="68">Halmstad</text>
          <text x="1244" y="819" textLength="85">Helsingborg</text><text class="capital" x="1208" y="924" textLength="112">København</text>
          <text x="1610" y="572" textLength="41">Växjö</text><text x="1861" y="636" textLength="50">Kalmar</text>
          <text x="1720" y="784" textLength="75">Karlskrona</text>
        </g>
      </svg>
      <div class="zoom">
        <span class="zoom-in"><svg width="20" height="20" viewBox="0 0 20 20"><path d="M10 0V20M0 9H20" stroke="#fff" stroke-width="3.600"/></svg></span>
        <span class="zoom-out"><svg width="20" height="20" viewBox="0 0 20 20"><path d="M0 9H20" stroke="#fff" stroke-width="4"/></svg></span>
      </div>
      <div class="layers"><svg width="18" height="18" viewBox="0 0 18 18"><path d="M9 0V18M0 9H18" stroke="#fff" stroke-width="4"/></svg></div>
      <div class="attribution">© <a>OpenStreetMap</a> contributors</div>
    </div>
    <div class="event-bar"><span><span class="num">22-6-2013 17:08:06:</span> <span class="words">Ongoing speed over ground event involving MHV 901 ENOE (OVLA) near</span> <span class="num pos">[54°39'10.1"N, 11°20'48.1"E]</span></span>
      <svg width="16" height="20" viewBox="0 0 16 20"><path d="M8 0L15.500 9H10.500V20H5.500V9H.5Z" fill="#222"/></svg></div>
    <h3 class="cell-title">Cell data</h3>
    <p class="cell-text">No cell selected.</p>
  </section>

  <aside class="side-col">
    <div class="tabs-panel">
      <div class="tabs-head"><span class="tab active">Map</span><span class="tab stats">Statistics</span><span class="tab events">Events</span></div>
      <div class="tabs-body">
        <h4>View</h4>
        <p class="coords">(57°16'07.4"N, 07°13'15.4"E)<br>(54°41'17.5"N, 16°46'44.6"E)</p>
        <h4>Cursor</h4>
        <p class="coords">...</p>
        <h4>Controls</h4>
        <div class="button load">Load and display cells</div>
        <h4 class="charts">Nautical charts</h4>
        <div class="field">Username</div>
        <div class="field second">Password</div>
        <div class="button enable">Enable</div>
      </div>
    </div>
    <div class="box status"><h5>Application status</h5><p>No cells loaded.</p></div>
    <div class="box shown">
      <h5>Events shown</h5>
      <div class="thead">
        <span class="th-id">ID</span><svg class="asc" width="16" height="14" viewBox="0 0 16 14"><path d="M8 0L15 13H1Z" fill="#7f83e0"/></svg>
        <span class="th-vessel">Vessel</span>
        <svg class="both" width="16" height="28" viewBox="0 0 16 28"><path d="M8 0L15 12H1ZM8 27L15 15H1Z" fill="#d8d8d8"/></svg>
        <svg class="both" width="16" height="28" viewBox="0 0 16 28"><path d="M8 0L15 12H1ZM8 27L15 15H1Z" fill="#d8d8d8"/></svg>
      </div>
      <div class="empty-row">No data available in table</div>
    </div>
  </aside>
</main>

<footer>(C) Copyright 2013-4 by the <a>Danish Maritime Authority</a>.</footer>
</body>
</html>
```
FILE: styles.css
```css
* { box-sizing: border-box; }
body { margin: 0; width: 2522px; height: 1744px; overflow: hidden; display: flex; flex-direction: column; background: #fff; color: #333; font-family: "Liberation Sans", Arial, sans-serif; }
h1, h3, h4, h5, p { margin: 0; }
svg { display: block; }
a { color: #428bca; }

/* browser window frame */
.chrome { flex: none; height: 145px; border-bottom: 2px solid #8b8b8b; font-family: "Open Sans", "Noto Sans", sans-serif; }
.tabstrip { position: relative; height: 73px; border-bottom: 1px solid #939393; background: linear-gradient(#fafafa 0, #e6e6e6 3px, #d8d8d8 20px, #b4b4b4 45px, #adadad 72px); }
.tab-shapes { position: absolute; left: 0; top: 0; }
.tab-title { position: absolute; left: 74px; top: 30px; line-height: 36px; font-size: 21.500px; color: #000; white-space: nowrap; letter-spacing: .68px; -webkit-text-stroke: .35px #000; }
.toolbar { height: 70px; display: flex; padding-top: 7px; background: linear-gradient(#ececec, #dadada); }
.nav { flex: none; width: 110px; height: 54px; }
.reload { flex: none; margin-left: 10px; width: 54px; height: 54px; display: flex; align-items: center; justify-content: center; border: 1.500px solid #a9a9a9; border-radius: 7px; background: linear-gradient(#f6f6f6, #e6e6e6); }
.omnibox { flex: 1; margin-left: 10px; height: 54px; display: flex; align-items: center; padding-left: 14px; border: 2px solid #a3a3a3; border-right: 0; border-radius: 7px 0 0 7px; background: #fff; }
.url { margin-left: 14px; font-size: 28px; line-height: 44px; color: #6b6b6b; letter-spacing: 1px; white-space: nowrap; -webkit-text-stroke: .3px #6b6b6b; }
.url b { font-weight: 400; color: #000; -webkit-text-stroke: .3px #000; }

/* page heading */
.page-header { flex: none; margin: 67px 0 38px 414px; width: 2052px; height: 198px; border-bottom: 2px solid #eee; }
.page-header h1 { font-size: 64px; line-height: 80px; font-weight: 400; letter-spacing: 1.340px; -webkit-text-stroke: 2.200px #333; }
.lead { margin-top: 9px; font: 300 39px/60px Roboto, "Liberation Sans", sans-serif; letter-spacing: -.48px; }

.columns { flex: none; display: grid; grid-template-columns: 1566px 486px; column-gap: 54px; margin-left: 388px; }

/* map */
.map { position: relative; width: 1566px; height: 756px; background: #b5d0d0; overflow: hidden; }
.map-canvas path { fill: none; vector-effect: non-scaling-stroke; stroke-linejoin: round; }
.map-canvas .land { fill: #f1eee8; }
.map-canvas .lake { fill: #b5d0d0; }
.map-canvas .coast { stroke: #c39bca; stroke-width: 2.300; stroke-dasharray: 6 3; }
.map-canvas .sanct { fill: #abccc4; }
.map-canvas .park { fill: #c2d8bc; }
.map-canvas .fj { stroke: #b292be; stroke-width: 4; }
.map-canvas .lakeline { stroke: #b5d0d0; stroke-width: 4; stroke-dasharray: 6 2 3 1; }
.map-canvas .speck { stroke: #b5d0d0; stroke-width: 3.500; stroke-dasharray: 2 9 6 12 1 7 3 14; }
.map-canvas .dots { stroke: #b5d0d0; stroke-width: 2.400; stroke-dasharray: 2 6 3 9 1 5 4 8; }
.map-canvas .islets { stroke: #f1eee8; stroke-width: 5; stroke-dasharray: 4 5 2 7; }
.map-canvas .pink { stroke: #ebbab3; stroke-width: 1.600; }
.map-canvas .rail { stroke: #bfbdba; stroke-width: 1.500; }
.map-canvas .green { stroke: #96d496; stroke-width: 2.300; }
.map-canvas .blue { stroke: #83a4d2; stroke-width: 2.900; }
.map-canvas .county { stroke: #d3a2d3; stroke-width: 2.400; }
.map-canvas .county-d { stroke: #d3a2d3; stroke-width: 2.400; stroke-dasharray: 9 4; }
.map-canvas .border { stroke: #d3a6d3; stroke-width: 5; }
.map-canvas .sea-b { stroke: #b298c4; stroke-width: 4; }
.map-canvas .sea-t { stroke: #b298c4; stroke-width: 2.300; }
.map-canvas .sea-g { stroke: #9bc8ae; stroke-width: 1.500; stroke-dasharray: 8 4; }
.map-canvas .ferry { stroke: #7c88f2; stroke-width: 1.900; stroke-dasharray: 7 6; }
.map-canvas .ferry-s { stroke: #7480f2; stroke-width: 1.600; }
.labels text { font: 17px "DejaVu Sans", sans-serif; fill: #444; stroke: #fff; stroke-width: 4px; stroke-opacity: .85; paint-order: stroke; stroke-linejoin: round; }
.labels .capital { font-size: 21px; }
.zoom { position: absolute; left: 14px; top: 14px; width: 50px; height: 92px; padding: 6px; border-radius: 7px; background: rgba(255,255,255,.62); }
.zoom span { display: flex; align-items: center; justify-content: center; width: 38px; background: #527bae; }
.zoom-in { height: 38px; border-radius: 6px 6px 0 0; }
.zoom-out { height: 40px; margin-top: 2px; border-radius: 0 0 6px 6px; }
.layers { position: absolute; right: 0; top: 60px; width: 32px; height: 32px; padding: 7px 0 0 9px; border-radius: 16px 0 0 16px; background: #00008b; }
.attribution { position: absolute; right: 6px; bottom: 93px; font-size: 20px; line-height: 28px; letter-spacing: .05px; word-spacing: .8px; white-space: nowrap; }

.event-bar { margin-top: 18px; height: 64px; display: flex; align-items: flex-start; gap: 9px; padding: 2px 0 0 15px; border: 2px solid #dcdcdc; border-radius: 6px; background: linear-gradient(#e8e8e8, #f5f5f5); font-size: 20.800px; line-height: 58px; white-space: nowrap; }
.event-bar svg { margin-top: 19px; }
.num { letter-spacing: .5px; }
.words { letter-spacing: -.25px; }
.pos { letter-spacing: .36px; }
.cell-title { margin-top: 53px; font-size: 32px; line-height: 40px; font-weight: 400; letter-spacing: .6px; -webkit-text-stroke: .8px #333; }
.cell-text { margin-top: 10px; font-size: 25.600px; line-height: 36px; letter-spacing: .6px; -webkit-text-stroke: .8px #333; }

/* sidebar */
.tabs-panel { height: 730px; padding: 6px 6px 0 4px; border: 2px solid #aaa; border-radius: 8px; font-family: "DejaVu Sans", Verdana, sans-serif; color: #222; }
.tabs-head { display: flex; gap: 4px; height: 66px; padding: 6px 0 0 6px; border: 2px solid #aaa; border-radius: 8px; background: linear-gradient(#e4e4e4, #c9c9c9 80%); font-size: 23px; line-height: 56px; text-align: center; }
.tab { height: 56px; border: 2px solid #d3d3d3; border-bottom: 0; border-radius: 8px 8px 0 0; color: #555; background: linear-gradient(#eee 48%, #e6e6e6 50%, #f3f3f3); }
.tab.active { width: 98px; height: 58px; padding-left: 2px; border-color: #aaa; color: #222; background: #fff; border-left-color: #ccc; }
.stats { width: 160px; letter-spacing: .2px; }
.events { width: 132px; letter-spacing: .3px; }
.tabs-body { padding: 31px 0 0 40px; }
.tabs-body h4 { font-size: 28px; line-height: 36px; }
.coords { margin: 2px 0 38px; font-size: 24px; line-height: 34px; letter-spacing: .74px; white-space: nowrap; }
.button { height: 50px; margin-left: 8px; padding-left: 12px; border: 2px solid #949494; background: linear-gradient(#f5f5f5 0, #f5f5f5 4px, #dfdfdf 5px, #f8f8f8); color: #000; font-size: 27.500px; line-height: 44px; letter-spacing: .14px; white-space: nowrap; }
.load { width: 332px; margin-top: 9px; }
.enable { width: 120px; margin-top: 6px; }
.tabs-body .charts { margin-top: 47px; letter-spacing: -.34px; }
.field { width: 328px; height: 48px; margin-top: 1px; padding-left: 2px; border: 2px solid #d6d6d6; border-top-color: #c2c2c2; box-shadow: inset 0 2px 2px #e5e5e5; background: #fff; color: #a9a9a9; font-size: 27.200px; line-height: 45px; }
.field.second { margin-top: -2px; }
.box { border: 2px solid #ddd; border-radius: 7px; padding: 31px 26px 0; }
.box h5 { font-size: 28px; line-height: 36px; letter-spacing: .25px; }
.status { margin-top: 18px; height: 126px; }
.status p { margin-top: 2px; font-size: 20px; line-height: 28px; }
.shown { margin-top: 36px; height: 188px; padding-right: 24px; }
.box.shown h5 { letter-spacing: -.1px; }
.thead { display: flex; height: 47px; padding: 3px 9px 0 18px; border-bottom: 2px solid #000; font-size: 25.600px; font-weight: 700; line-height: 42px; }
.th-id { width: 35px; }
.asc { margin-top: 7px; }
.th-vessel { flex: 1; margin-left: 27px; letter-spacing: -.3px; }
.both { margin: 8px 0 0; }
.both + .both { margin-left: 42px; }
.empty-row { height: 44px; padding-bottom: 2px; background: #e2e4ff; text-align: center; font-size: 26px; line-height: 42px; letter-spacing: .27px; }

footer { margin-top: auto; padding: 0 0 19px 441px; font-size: 26px; line-height: 36px; letter-spacing: .06px; }
```
